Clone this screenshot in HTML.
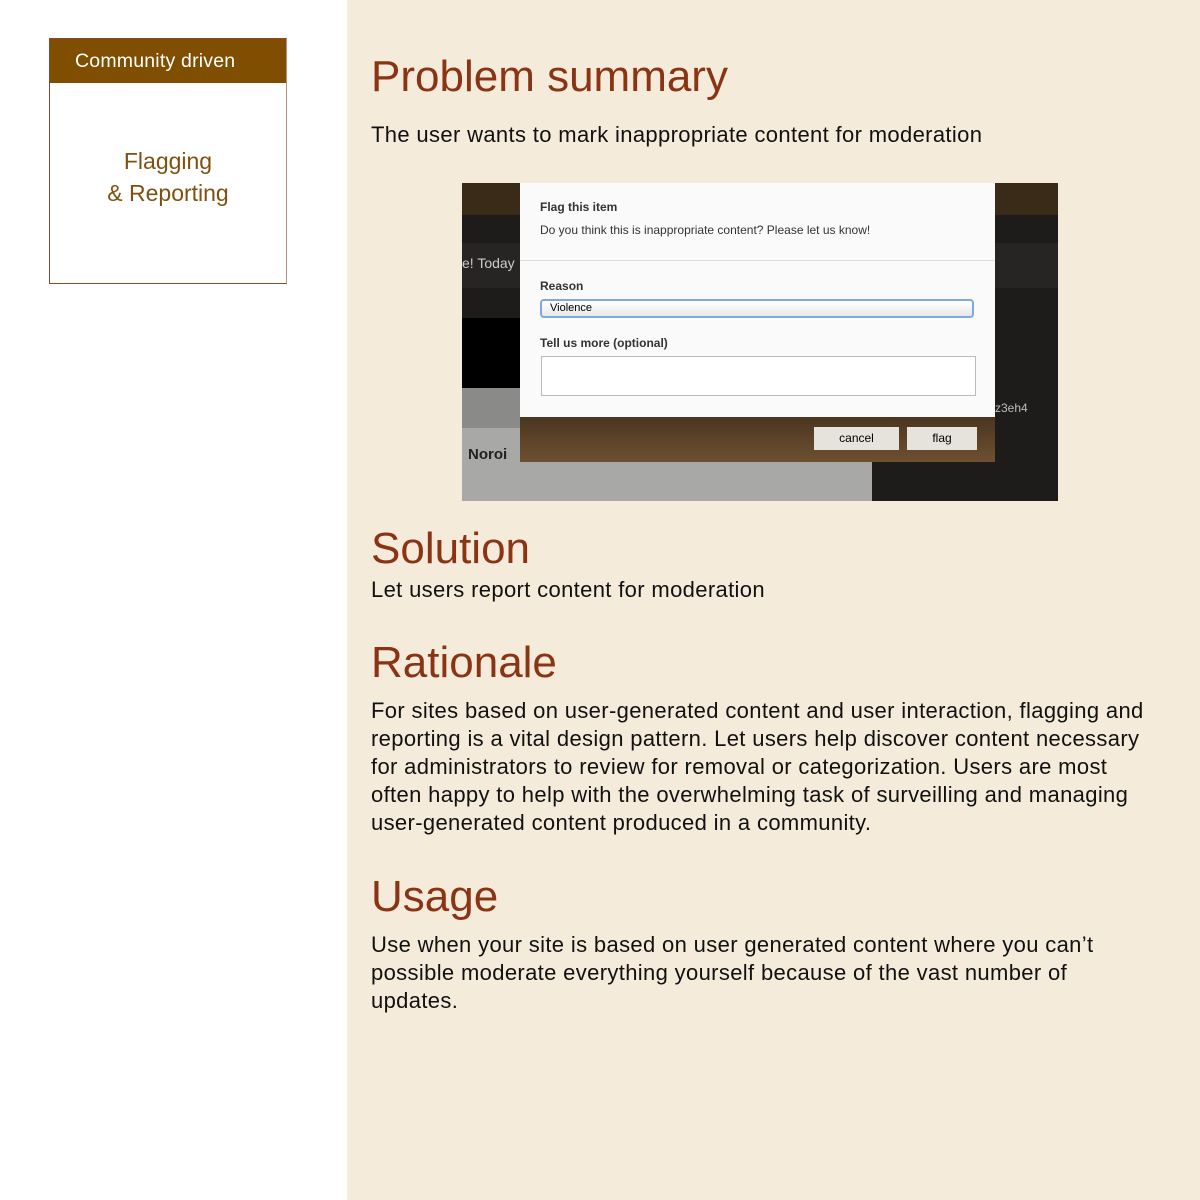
<!DOCTYPE html>
<html><head><meta charset="utf-8"><style>
*{margin:0;padding:0;box-sizing:border-box}
body{width:1200px;height:1200px;background:#fff;font-family:"Liberation Sans",sans-serif;position:relative;overflow:hidden}
#right{position:absolute;left:347px;top:0;width:853px;height:1200px;background:#f5ebdb}
.box{position:absolute;left:49px;top:38px;width:238px;height:246px;border:1px solid #8a4a30;border-right-color:#b89080;background:#fff}
.box .hd{height:44px;background:#7f4e00;color:#fff;font-size:19.5px;padding:11px 0 0 25px;letter-spacing:0.2px}
.box .t{position:absolute;top:106px;left:0;width:100%;text-align:center;color:#7f5010;font-size:23px;line-height:32px}
h1{position:absolute;left:371px;font-weight:normal;color:#8a3414;font-size:44px}
p{position:absolute;left:371px;color:#111;font-size:22px;line-height:28px;letter-spacing:0.35px}
.a{position:absolute}
</style></head><body>
<div id="right"></div>
<div class="box"><div class="hd">Community driven</div><div class="t">Flagging<br>&amp; Reporting</div></div>
<h1 style="top:52px">Problem summary</h1>
<p style="top:121px">The user wants to mark inappropriate content for moderation</p>
<div class="a" style="left:462px;top:183px;width:596px;height:318px;background:#1d1c1b;overflow:hidden">
 <div class="a" style="left:0;top:0;width:596px;height:32px;background:#3a2a18"></div>
 <div class="a" style="left:0;top:60px;width:596px;height:45px;background:#262524"></div>
 <div class="a" style="left:0;top:135px;width:410px;height:70px;background:#000"></div>
 <div class="a" style="left:0;top:205px;width:410px;height:113px;background:#8a8a88"></div>
 <div class="a" style="left:0;top:245px;width:410px;height:73px;background:#a8a8a6"></div>
 <div class="a" style="left:0;top:72px;color:#ccc;font-size:14px">e! Today</div>
 <div class="a" style="left:6px;top:263px;color:#222;font-size:15px;font-weight:bold">Noroi</div>
 <div class="a" style="left:533px;top:218px;color:#bbb;font-size:12px">z3eh4</div>
 <div class="a" style="left:58px;top:0;width:475px;height:279px;background:#fafafa">
  <div class="a" style="left:20px;top:17px;font-size:12px;font-weight:bold;color:#333">Flag this item</div>
  <div class="a" style="left:20px;top:40px;font-size:12px;color:#333">Do you think this is inappropriate content? Please let us know!</div>
  <div class="a" style="left:0;top:77px;width:475px;height:1px;background:#ddd"></div>
  <div class="a" style="left:20px;top:96px;font-size:12px;font-weight:bold;color:#333">Reason</div>
  <div class="a" style="left:20px;top:116px;width:434px;height:19px;border:2px solid #7fa8e0;border-radius:4px;background:linear-gradient(#fff,#e8e8e8);font-size:11px;padding:1px 8px">Violence</div>
  <div class="a" style="left:20px;top:153px;font-size:12px;font-weight:bold;color:#333">Tell us more (optional)</div>
  <div class="a" style="left:21px;top:173px;width:435px;height:40px;border:1px solid #bbb;background:#fff"></div>
  <div class="a" style="left:0;top:234px;width:475px;height:45px;background:linear-gradient(#4a3520,#6e5030)">
   <div class="a" style="left:294px;top:10px;width:85px;height:23px;background:#e6e2dc;font-size:12px;text-align:center;padding-top:4px">cancel</div>
   <div class="a" style="left:387px;top:10px;width:70px;height:23px;background:#e6e2dc;font-size:12px;text-align:center;padding-top:4px">flag</div>
  </div>
 </div>
</div>
<h1 style="top:524px">Solution</h1>
<p style="top:576px">Let users report content for moderation</p>
<h1 style="top:638px">Rationale</h1>
<p style="top:697px;width:790px">For sites based on user-generated content and user interaction, flagging and reporting is a vital design pattern. Let users help discover content necessary for administrators to review for removal or categorization. Users are most often happy to help with the overwhelming task of surveilling and managing user-generated content produced in a community.</p>
<h1 style="top:872px">Usage</h1>
<p style="top:931px;width:740px">Use when your site is based on user generated content where you can’t possible moderate everything yourself because of the vast number of updates.</p>
</body></html>
